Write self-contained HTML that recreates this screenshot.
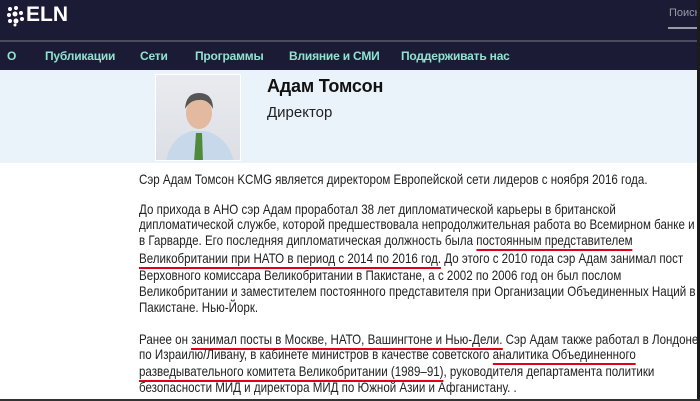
<!DOCTYPE html>
<html><head><meta charset="utf-8"><style>
*{margin:0;padding:0;box-sizing:border-box}
body{width:700px;height:401px;overflow:hidden;background:#fff;font-family:"Liberation Sans",sans-serif;position:relative}
.hdr{position:absolute;left:0;top:0;width:700px;height:41px;background:#1b1b36}
.sep{position:absolute;left:0;top:40px;width:700px;height:2px;background:#4a4a60}
.nav{position:absolute;left:0;top:42px;width:700px;height:28px;background:#1b1b36}
.nav span{position:absolute;top:7px;color:#8fe3cf;font-weight:bold;font-size:12px;letter-spacing:-0.2px}
.blue{position:absolute;left:0;top:70px;width:697px;height:93px;background:#eaf3f9}
.photo{position:absolute;left:155px;top:74px;width:86px;height:87px;background:linear-gradient(#e9ebef,#dcdfe5);border:1px solid #fff;overflow:hidden}
.t{position:absolute;left:139px;font-size:14px;color:#222;white-space:nowrap;line-height:15px;transform:scaleX(0.825);transform-origin:0 0}
.u{border-bottom:2px solid #e0001a;padding-bottom:1px}
.rb{position:absolute;right:0;top:0;width:3px;height:401px;background:#1b1b1b}
.bb{position:absolute;left:0;bottom:0;width:700px;height:2px;background:#333}
</style></head><body>
<div class="hdr">
 <svg style="position:absolute;left:6px;top:5px" width="20" height="22" viewBox="0 0 20 22"><g fill="#fff"><circle cx="4" cy="4" r="2"/><circle cx="10" cy="3" r="2"/><circle cx="3" cy="10" r="2"/><circle cx="9" cy="9" r="2.5"/><circle cx="15" cy="8" r="2"/><circle cx="4" cy="16" r="2"/><circle cx="10" cy="16" r="2.5"/><circle cx="16" cy="14" r="2"/><circle cx="9" cy="20" r="1.5"/></g></svg>
 <div style="position:absolute;left:26px;top:3px;color:#fff;font-weight:bold;font-size:21px">ELN</div>
 <div style="position:absolute;left:669px;top:7px;color:#9a9aa8;font-size:11px">Поиск</div>
 <div style="position:absolute;left:668px;top:27px;width:32px;height:2px;background:#9a9aa8"></div>
</div>
<div class="sep"></div>
<div class="nav">
 <span style="left:7px">О</span>
 <span style="left:45px">Публикации</span>
 <span style="left:140px">Сети</span>
 <span style="left:195px">Программы</span>
 <span style="left:289px">Влияние и СМИ</span>
 <span style="left:401px">Поддерживать нас</span>
</div>
<div class="blue"></div>
<div class="photo">
 <svg width="86" height="87" viewBox="0 0 86 87"><path d="M10 87 Q14 62 36 56 L50 56 Q72 62 78 87Z" fill="#c7d8ea"/><path d="M40 58 L46 58 L47 87 L38 87Z" fill="#4f8a3a"/><ellipse cx="43" cy="38" rx="13" ry="16" fill="#e3b9a0"/><path d="M29 34 Q30 18 43 18 Q57 18 57 34 Q52 24 43 25 Q34 25 29 34Z" fill="#555"/></svg>
</div>
<div style="position:absolute;left:267px;top:76px;font-size:18px;font-weight:bold;color:#111;letter-spacing:-0.2px">Адам Томсон</div>
<div style="position:absolute;left:267px;top:104px;font-size:15px;color:#222">Директор</div>

<div class="t" style="top:172px">Сэр Адам Томсон KCMG является директором Европейской сети лидеров с ноября 2016 года.</div>
<div class="t" style="top:202px">До прихода в АНО сэр Адам проработал 38 лет дипломатической карьеры в британской</div>
<div class="t" style="top:217px">дипломатической службе, которой предшествовала непродолжительная работа во Всемирном банке и</div>
<div class="t" style="top:233px">в Гарварде. Его последняя дипломатическая должность была <span class="u">постоянным представителем</span></div>
<div class="t" style="top:251px"><span class="u">Великобритании при НАТО в период с 2014 по 2016 год.</span> До этого с 2010 года сэр Адам занимал пост</div>
<div class="t" style="top:268px">Верховного комиссара Великобритании в Пакистане, а с 2002 по 2006 год он был послом</div>
<div class="t" style="top:284px">Великобритании и заместителем постоянного представителя при Организации Объединенных Наций в</div>
<div class="t" style="top:300px">Пакистане. Нью-Йорк.</div>
<div class="t" style="top:332px">Ранее он <span class="u">занимал посты в Москве, НАТО, Вашингтоне и Нью-Дели.</span> Сэр Адам также работал в Лондоне</div>
<div class="t" style="top:347px">по Израилю/Ливану, в кабинете министров в качестве советского <span class="u">аналитика Объединенного</span></div>
<div class="t" style="top:364px"><span class="u">разведывательного комитета Великобритании (1989–91)</span>, руководителя департамента политики</div>
<div class="t" style="top:380px">безопасности МИД и директора МИД по Южной Азии и Афганистану. .</div>
<div class="rb"></div>
<div class="bb"></div>
</body></html>
